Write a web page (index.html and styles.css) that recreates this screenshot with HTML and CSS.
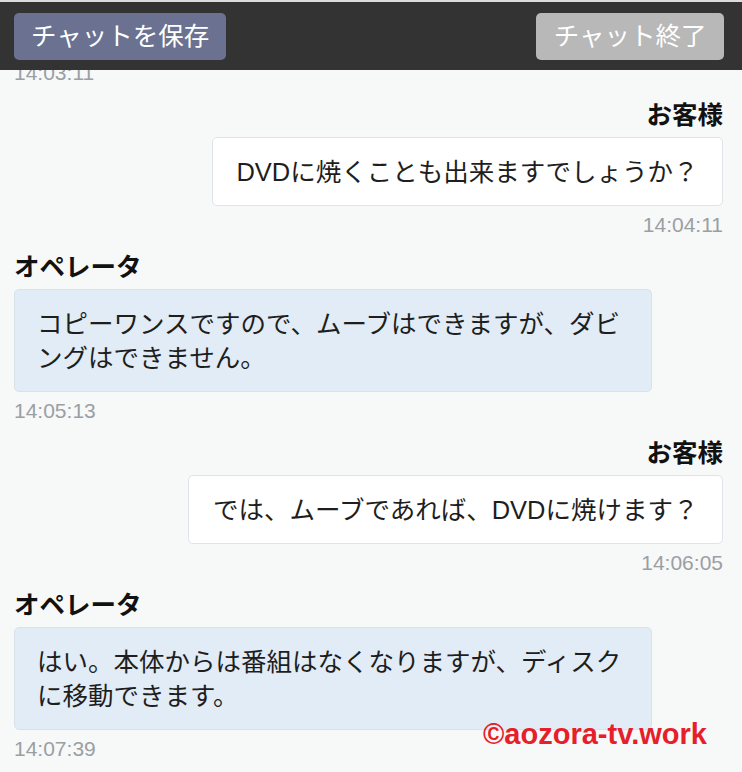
FILE: index.html
```html
<!DOCTYPE html>
<html lang="ja">
<head>
<meta charset="utf-8">
<title>チャット</title>
<link rel="stylesheet" href="styles.css">
</head>
<body>
<div class="topline"></div>
<header class="bar">
  <button class="btn btn-save">チャットを保存</button>
  <button class="btn btn-end">チャット終了</button>
</header>
<main class="log">
  <div class="msg op first">
    <div class="time">14:03:11</div>
  </div>
  <div class="msg user">
    <div class="name">お客様</div>
    <div class="bubble">DVDに焼くことも出来ますでしょうか？</div>
    <div class="time">14:04:11</div>
  </div>
  <div class="msg op">
    <div class="name">オペレータ</div>
    <div class="bubble">コピーワンスですので、ムーブはできますが、ダビングはできません。</div>
    <div class="time">14:05:13</div>
  </div>
  <div class="msg user">
    <div class="name">お客様</div>
    <div class="bubble">では、ムーブであれば、DVDに焼けます？</div>
    <div class="time">14:06:05</div>
  </div>
  <div class="msg op">
    <div class="name">オペレータ</div>
    <div class="bubble">はい。本体からは番組はなくなりますが、ディスクに移動できます。</div>
    <div class="time">14:07:39</div>
  </div>
</main>
<div class="mark">©aozora-tv.work</div>
</body>
</html>
```
FILE: styles.css
```css
html, body {
  margin: 0;
  padding: 0;
}
body {
  width: 742px;
  height: 772px;
  overflow: hidden;
  background: #f7f8f8;
  font-family: "Liberation Sans", "Noto Sans CJK JP", sans-serif;
  color: #222;
  display: flex;
  flex-direction: column;
  position: relative;
}
.topline {
  height: 2px;
  background: #dcdcdc;
  flex: none;
}
.bar {
  flex: none;
  height: 68px;
  background: #333333;
  display: flex;
  align-items: center;
  justify-content: space-between;
  padding: 0 18px 0 14px;
}
.btn {
  height: 47px;
  border: none;
  border-radius: 5px;
  padding: 0 17px;
  font-family: "Liberation Sans", "Noto Sans CJK JP", sans-serif;
  font-size: 25.5px;
  color: #fff;
  line-height: 47px;
}
.btn-save {
  background: #6b7190;
}
.btn-end {
  background: #b8b8b8;
  padding: 0 17.5px;
}
.log {
  flex: 1;
  overflow: hidden;
  padding: 0 19px 0 14px;
  display: flex;
  flex-direction: column;
}
.msg {
  display: flex;
  flex-direction: column;
  margin-bottom: 15px;
}
.msg.first {
  margin-top: -16px;
}
.msg.user {
  align-items: flex-end;
}
.msg.op {
  align-items: flex-start;
}
.name {
  font-size: 25.5px;
  font-weight: 700;
  line-height: 30px;
  color: #111;
  margin-bottom: 7px;
}
.bubble {
  font-size: 25.5px;
  line-height: 34px;
  padding: 17px 22px 16px;
  border-radius: 5px;
  color: #1e1e1e;
}
.user .bubble {
  background: #ffffff;
  border: 1px solid #e0e4e8;
  padding-left: 23.5px;
  padding-right: 23.5px;
}
.op .bubble {
  background: #e1ecf6;
  border: 1px solid #d8e2eb;
  max-width: 90%;
  box-sizing: border-box;
}
.time {
  font-size: 21px;
  line-height: 24px;
  color: #9a9fa4;
  margin-top: 7px;
}
.mark {
  position: absolute;
  left: 483px;
  top: 720px;
  font-family: "Liberation Sans", sans-serif;
  font-weight: 700;
  font-size: 29px;
  line-height: 28px;
  color: #e5202a;
}
```
